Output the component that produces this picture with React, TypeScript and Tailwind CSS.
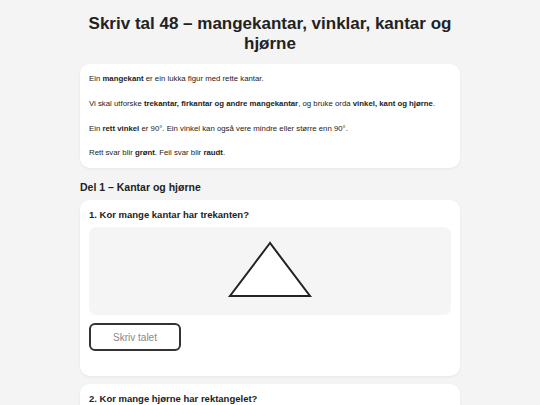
export default function App() {
  return (
    <div className="min-h-screen bg-[#f4f4f4] text-[#222] font-['Liberation_Sans',Arial,sans-serif]">
      <div className="mx-auto w-[380px] pt-[14px]">
        <h1 className="text-center text-[17px] font-bold leading-[20px] text-[#222]">
          Skriv tal 48 – mangekantar, vinklar, kantar og hjørne
        </h1>

        <div className="mt-[10px] rounded-[10px] bg-white px-[9px] py-[9px] text-[7.8px] leading-[10px] shadow-[0_1px_3px_rgba(0,0,0,0.06)]">
          <p className="my-[1px]">
            Ein <b>mangekant</b> er ein lukka figur med rette kantar.
          </p>
          <p className="mt-[15px]">
            Vi skal utforske <b>trekantar, firkantar og andre mangekantar</b>, og bruke orda{' '}
            <b>vinkel, kant og hjørne</b>.
          </p>
          <p className="mt-[15px]">
            Ein <b>rett vinkel</b> er 90°. Ein vinkel kan også vere mindre eller større enn 90°.
          </p>
          <p className="mt-[14px] mb-[1px]">
            Rett svar blir <b>grønt</b>. Feil svar blir <b>raudt</b>.
          </p>
        </div>

        <h2 className="mt-[13px] text-[10.5px] font-bold leading-[13px]">Del 1 – Kantar og hjørne</h2>

        <div className="mt-[6px] rounded-[10px] bg-white px-[9px] pt-[9px] pb-[25px] shadow-[0_1px_3px_rgba(0,0,0,0.06)]">
          <h3 className="text-[9.5px] font-bold leading-[12px]">1. Kor mange kantar har trekanten?</h3>
          <div className="mt-[6px] flex h-[88px] items-center justify-center rounded-[7px] bg-[#f5f5f5]">
            <svg width="90" height="60" viewBox="0 0 90 60" className="-mt-[6px]">
              <polygon points="45,5 5,58 85,58" fill="#fff" stroke="#222" strokeWidth="2" />
            </svg>
          </div>
          <input
            placeholder="Skriv talet"
            className="mt-[8px] block h-[28px] w-[92px] rounded-[6px] border-2 border-[#333] bg-white text-center text-[10px] text-[#222] placeholder:text-[#888] outline-none"
          />
        </div>

        <div className="mt-[8px] rounded-[10px] bg-white px-[9px] pt-[9px] pb-[20px] shadow-[0_1px_3px_rgba(0,0,0,0.06)]">
          <h3 className="text-[9.5px] font-bold leading-[12px]">2. Kor mange hjørne har rektangelet?</h3>
        </div>
      </div>
    </div>
  );
}
